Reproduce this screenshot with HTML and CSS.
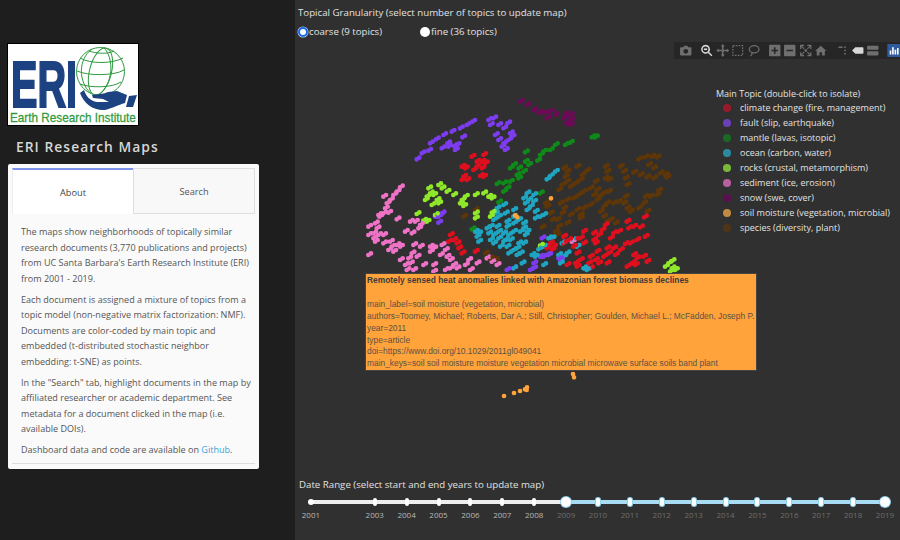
FILE: index.html
```html
<!DOCTYPE html>
<html lang="en">
<head>
<meta charset="utf-8">
<title>ERI Research Maps</title>
<link rel="stylesheet" href="styles.css">
</head>
<body>
<div class="app">
  <aside class="sidebar">
    <svg class="logo" viewBox="0 0 130 81" width="130" height="81" role="img" aria-label="Earth Research Institute logo">
      <rect width="130" height="81" fill="#fff"/>
      <text class="logo-eri" transform="translate(3 63) scale(.61 1)">ERI</text>
      <g fill="none" stroke="#2f9a3f" stroke-width="1">
        <circle cx="92.500" cy="27.500" r="24"/>
        <ellipse cx="92.500" cy="27.500" rx="11" ry="24" transform="rotate(14 92.500 27.500)"/>
        <path d="M96 3.800 C106 14 106 40 90 51.500"/>
        <path d="M84 5 C70 15 70 38 83 49.500"/>
        <path d="M72 14 C82 20 104 20 115 14"/>
        <path d="M69 27 C80 32 106 32 116 26"/>
        <path d="M72 40 C82 44 104 44 113 38"/>
        <path d="M81 7 C90 10 100 10 106 7"/>
      </g>
      <path fill="#1d4282" d="M72 49 L76 46 C78 52 82 57 89 58 L101 58 L95 55 L85 54 L84 51 C90 50 96 50 100 48 L109 47 L119 51 L117 59 C110 61 105 64 97 66 C86 67 76 60 72 49 Z"/>
      <path fill="#1d4282" d="M121 52 L129 51 L125 63 L118 63 Z"/>
      <text class="logo-name" transform="translate(2 78) scale(.87 1)">Earth Research Institute</text>
    </svg>
    <h1 class="app-title">ERI Research Maps</h1>
    <section class="panel">
      <div class="tabs">
        <div class="tab tab-active">About</div>
        <div class="tab">Search</div>
      </div>
      <div class="about">
        <p>The maps show neighborhoods of topically similar research documents (3,770 publications and projects) from UC Santa Barbara's Earth Research Institute (ERI) from 2001 - 2019.</p>
        <p>Each document is assigned a mixture of topics from a topic model (non-negative matrix factorization: NMF). Documents are color-coded by main topic and embedded (t-distributed stochastic neighbor embedding: t-SNE) as points.</p>
        <p>In the "Search" tab, highlight documents in the map by affiliated researcher or academic department. See metadata for a document clicked in the map (i.e. available DOIs).</p>
        <p>Dashboard data and code are available on <a href="#github">Github</a>.</p>
      </div>
    </section>
  </aside>

  <main class="main">
    <div class="control-label">Topical Granularity (select number of topics to update map)</div>
    <div class="radios">
      <label class="radio"><input type="radio" name="gran" checked>coarse (9 topics)</label>
      <label class="radio"><input type="radio" name="gran">fine (36 topics)</label>
    </div>

    <div class="plot">
      <svg class="scatter" viewBox="-165 -183 1815 1314" aria-hidden="true">
        <g id="cloud">
        <path class="pts" stroke="#ee72c6" d="M150 262h.1M140 275h.1M130 285h.1M100 290h.1M120 300h.1M110 310h.1M105 325h.1M100 340h.1M85 345h.1M115 338h.1M88 350h.1M140 358h.1M75 370h.1M80 385h.1M55 380h.1M55 405h.1M70 400h.1M85 405h.1M70 415h.1M100 405h.1M75 425h.1M100 430h.1M120 425h.1M125 440h.1M140 435h.1M150 440h.1M115 450h.1M130 455h.1M55 465h.1M180 365h.1M195 365h.1M210 375h.1M205 385h.1M165 395h.1M185 400h.1M190 435h.1M210 440h.1M240 440h.1M250 445h.1M275 435h.1M240 455h.1M185 460h.1M175 475h.1M150 480h.1M165 495h.1M180 490h.1M200 470h.1M285 450h.1M290 470h.1M270 465h.1M220 495h.1M250 495h.1M250 515h.1M300 480h.1M310 495h.1M320 505h.1M345 495h.1M380 490h.1M355 480h.1M190 510h.1M170 510h.1M300 505h.1M285 510h.1M410 475h.1M425 485h.1M440 495h.1M360 510h.1M665 425h.1"/>
        <path class="pts" stroke="#7d3cf0" d="M200 178h.1M215 160h.1M235 152h.1M240 130h.1M258 118h.1M280 105h.1M305 95h.1M330 85h.1M350 75h.1M367 65h.1M275 145h.1M292 130h.1M295 140h.1M312 138h.1M315 150h.1M320 135h.1M337 112h.1M415 60h.1M420 75h.1M430 55h.1M445 75h.1M460 85h.1M472 70h.1M435 105h.1M445 120h.1M460 130h.1M465 150h.1M480 100h.1M485 110h.1M475 120h.1M455 140h.1M265 350h.1M275 340h.1M255 350h.1M270 345h.1M265 368h.1M575 415h.1M590 465h.1M580 470h.1M570 470h.1M595 465h.1M550 490h.1M540 510h.1M550 505h.1M625 475h.1M630 480h.1M470 510h.1M490 505h.1"/>
        <path class="pts" stroke="#6d0a58" stroke-width="9" d="M510 5h.1M530 15h.1M550 30h.1M565 38h.1M580 40h.1M590 55h.1M600 35h.1M615 45h.1M645 42h.1M660 45h.1M642 55h.1M662 60h.1M648 70h.1M660 75h.1"/>
        <path class="pts" stroke="#0f8a1a" d="M725 112h.1M735 112h.1M660 128h.1M645 135h.1M615 135h.1M600 150h.1M580 155h.1M570 165h.1M562 182h.1M525 157h.1M525 185h.1M535 195h.1M490 195h.1M480 205h.1M505 205h.1M520 215h.1M500 225h.1M505 235h.1M480 245h.1M460 250h.1M440 252h.1M470 265h.1M460 275h.1M445 307h.1M365 388h.1M570 280h.1"/>
        <path class="pts" stroke="#5e3608" d="M865 178h.1M885 172h.1M905 170h.1M920 172h.1M895 195h.1M910 205h.1M850 218h.1M870 225h.1M890 232h.1M910 235h.1M930 220h.1M945 225h.1M950 232h.1M885 290h.1M900 290h.1M920 285h.1M925 272h.1M880 310h.1M865 325h.1M890 335h.1M640 205h.1M650 215h.1M645 230h.1M650 245h.1M635 255h.1M625 270h.1M680 200h.1M710 212h.1M695 225h.1M690 240h.1M675 250h.1M660 260h.1M765 200h.1M770 215h.1M765 235h.1M775 240h.1M810 200h.1M820 215h.1M825 235h.1M830 255h.1M735 245h.1M740 270h.1M720 265h.1M700 275h.1M685 285h.1M670 295h.1M650 300h.1M630 310h.1M640 325h.1M635 340h.1M620 360h.1M605 360h.1M625 380h.1M615 395h.1M575 382h.1M590 320h.1M585 310h.1M600 340h.1M660 345h.1M680 330h.1M700 325h.1M720 315h.1M690 345h.1M690 355h.1M760 280h.1M745 290h.1M730 285h.1M775 275h.1M740 300h.1M770 310h.1M760 320h.1M750 335h.1M760 350h.1M770 365h.1M790 310h.1M805 305h.1M825 290h.1M820 310h.1M830 325h.1M840 335h.1M650 370h.1M795 370h.1M780 360h.1M620 405h.1M405 460h.1M420 475h.1M435 480h.1M375 330h.1M340 350h.1"/>
        <path class="pts" stroke="#1ea5c2" d="M530 280h.1M520 295h.1M535 300h.1M550 285h.1M550 305h.1M525 310h.1M540 320h.1M530 330h.1M555 335h.1M555 355h.1M580 345h.1M570 350h.1M460 315h.1M440 325h.1M435 340h.1M445 350h.1M430 360h.1M465 340h.1M490 330h.1M490 350h.1M470 365h.1M505 360h.1M470 380h.1M440 380h.1M410 385h.1M420 380h.1M445 395h.1M460 400h.1M475 405h.1M490 395h.1M520 370h.1M520 385h.1M510 395h.1M530 395h.1M525 405h.1M375 395h.1M385 400h.1M380 410h.1M385 425h.1M420 420h.1M430 430h.1M465 420h.1M480 420h.1M450 440h.1M470 440h.1M490 450h.1M505 430h.1M520 430h.1M500 445h.1M510 460h.1M475 460h.1M500 465h.1M515 490h.1M590 238h.1M600 228h.1M615 215h.1M545 465h.1M555 470h.1M565 448h.1M650 460h.1M625 465h.1M630 490h.1M580 495h.1M640 470h.1M605 415h.1M595 415h.1M580 440h.1M635 430h.1M670 420h.1M680 440h.1M490 505h.1M700 505h.1M710 510h.1M460 425h.1M445 415h.1M430 405h.1M415 400h.1M490 370h.1"/>
        <path class="pts" stroke="#e00f1e" d="M365 170h.1M400 165h.1M380 185h.1M395 185h.1M405 190h.1M380 200h.1M370 210h.1M395 205h.1M335 200h.1M345 205h.1M340 230h.1M335 240h.1M350 240h.1M390 228h.1M400 230h.1M300 405h.1M310 420h.1M295 425h.1M320 430h.1M325 445h.1M335 460h.1M375 455h.1M882 352h.1M830 365h.1M850 380h.1M870 382h.1M835 385h.1M765 375h.1M755 390h.1M745 405h.1M700 395h.1M730 400h.1M730 420h.1M735 430h.1M790 400h.1M780 415h.1M805 395h.1M885 410h.1M860 420h.1M840 430h.1M825 432h.1M640 410h.1M655 420h.1M690 415h.1M700 430h.1M675 420h.1M600 430h.1M590 445h.1M610 440h.1M605 450h.1M770 445h.1M790 445h.1M810 450h.1M775 460h.1M795 465h.1M740 455h.1M720 470h.1M680 460h.1M675 490h.1M690 480h.1M715 490h.1M735 480h.1M760 470h.1M745 490h.1M850 465h.1M880 470h.1M890 485h.1M845 490h.1M855 495h.1M830 500h.1M770 490h.1M650 495h.1M860 475h.1M640 430h.1M670 440h.1M720 505h.1M680 500h.1"/>
        <path class="pts" stroke="#8fe82a" d="M265 255h.1M275 265h.1M290 275h.1M310 285h.1M235 265h.1M240 280h.1M230 290h.1M250 285h.1M260 300h.1M245 315h.1M265 310h.1M225 300h.1M345 290h.1M335 300h.1M330 310h.1M340 318h.1M375 285h.1M400 280h.1M415 290h.1M425 295h.1M200 342h.1M220 362h.1M230 365h.1M255 345h.1M375 340h.1M375 355h.1M420 350h.1M425 338h.1M570 437h.1M965 483h.1M955 490h.1M945 500h.1M965 505h.1M975 510h.1M960 515h.1"/>
        </g>
        <use href="#cloud" transform="translate(8 -5)"/>
        <path class="pts" stroke="#ffa33a" d="M495 346h.1M502 352h.1M603 295h.1M669 822h.1M672 832h.1M462 888h.1M492 879h.1M510 873h.1M525 868h.1M531 862h.1M530 870h.1"/>
      </svg>

      <div class="modebar">
        <div class="mb-group">
          <svg class="mb-icon" viewBox="0 0 16 16"><path fill-rule="evenodd" d="M2 4h3l1-2h4l1 2h3a1 1 0 0 1 1 1v8a1 1 0 0 1-1 1H2a1 1 0 0 1-1-1V5a1 1 0 0 1 1-1zM8 6a3 3 0 1 0 0 6 3 3 0 0 0 0-6z"/></svg>
        </div>
        <div class="mb-group">
          <svg class="mb-icon mb-on" viewBox="0 0 16 16"><path fill-rule="evenodd" d="M6.500 1a5.500 5.500 0 0 1 4.400 8.800l4 4-1.300 1.300-4-4A5.500 5.500 0 1 1 6.500 1zM6.500 3a3.500 3.500 0 1 0 0 7 3.500 3.500 0 0 0 0-7z"/><path d="M4.500 5.500h4v2h-4z"/></svg>
          <svg class="mb-icon" viewBox="0 0 16 16"><path d="M8 0l2.500 3H9v4h4V5.500L16 8l-3 2.500V9H9v4h1.500L8 16l-2.500-3H7V9H3v1.500L0 8l3-2.500V7h4V3H5.500z"/></svg>
          <svg class="mb-icon mb-line" viewBox="0 0 16 16"><rect x="2" y="2" width="12" height="12" stroke-dasharray="2 1.500"/></svg>
          <svg class="mb-icon mb-line" viewBox="0 0 16 16"><ellipse cx="8.500" cy="6.500" rx="6" ry="4.500"/><path d="M6 11c0 2-1 3-2 4"/></svg>
        </div>
        <div class="mb-group">
          <svg class="mb-icon" viewBox="0 0 16 16"><path fill-rule="evenodd" d="M2 1h12a1 1 0 0 1 1 1v12a1 1 0 0 1-1 1H2a1 1 0 0 1-1-1V2a1 1 0 0 1 1-1zM7 4v3H4v2h3v3h2V9h3V7H9V4z"/></svg>
          <svg class="mb-icon" viewBox="0 0 16 16"><path fill-rule="evenodd" d="M2 1h12a1 1 0 0 1 1 1v12a1 1 0 0 1-1 1H2a1 1 0 0 1-1-1V2a1 1 0 0 1 1-1zM4 7v2h8V7z"/></svg>
          <svg class="mb-icon" viewBox="0 0 16 16"><path d="M1 1h5v1.500H3.500L6.500 5.500 5.500 6.500 2.500 3.500V6H1zM15 1v5h-1.500V3.500l-3 3-1-1 3-3H10V1zM1 15v-5h1.500v2.500l3-3 1 1-3 3H6V15zM15 15h-5v-1.500h2.500l-3-3 1-1 3 3V10H15z"/><path d="M6.500 6.500h3v3h-3z"/></svg>
          <svg class="mb-icon" viewBox="0 0 16 16"><path d="M8 2l7 6.500h-2V14H9.500v-4h-3v4H3V8.500H1z"/></svg>
        </div>
        <div class="mb-group">
          <svg class="mb-icon" viewBox="0 0 16 16"><path d="M4 3h5v2H4zM11 3h2v2h-2zM11 7h2v2h-2zM11 11h2v2h-2z"/></svg>
          <svg class="mb-icon mb-bright" viewBox="0 0 16 16"><path d="M5 4h9a1 1 0 0 1 1 1v6a1 1 0 0 1-1 1H5L1 8z"/></svg>
          <svg class="mb-icon" viewBox="0 0 16 16"><path d="M2 2h12a1 1 0 0 1 1 1v3a1 1 0 0 1-1 1H2a1 1 0 0 1-1-1V3a1 1 0 0 1 1-1zM2 9h12a1 1 0 0 1 1 1v3a1 1 0 0 1-1 1H2a1 1 0 0 1-1-1v-3a1 1 0 0 1 1-1z"/></svg>
        </div>
        <div class="mb-group">
          <svg class="mb-icon mb-logo" viewBox="0 0 16 16"><rect width="16" height="16" rx="1.500" fill="#2f5a9e"/><path fill="#fff" d="M3 13V8h2v5zM6 13V4h2v9zM9 13V7h2v6zM12 13V5h2v8z"/></svg>
        </div>
      </div>

      <div class="legend">
        <div class="legend-title">Main Topic (double-click to isolate)</div>
        <ul class="legend-list">
          <li><span class="swatch s-climate"></span>climate change (fire, management)</li>
          <li><span class="swatch s-fault"></span>fault (slip, earthquake)</li>
          <li><span class="swatch s-mantle"></span>mantle (lavas, isotopic)</li>
          <li><span class="swatch s-ocean"></span>ocean (carbon, water)</li>
          <li><span class="swatch s-rocks"></span>rocks (crustal, metamorphism)</li>
          <li><span class="swatch s-sediment"></span>sediment (ice, erosion)</li>
          <li><span class="swatch s-snow"></span>snow (swe, cover)</li>
          <li><span class="swatch s-soil"></span>soil moisture (vegetation, microbial)</li>
          <li><span class="swatch s-species"></span>species (diversity, plant)</li>
        </ul>
      </div>

      <div class="tooltip">
        <div class="tip-title">Remotely sensed heat anomalies linked with Amazonian forest biomass declines</div>
        <div class="tip-line">&nbsp;</div>
        <div class="tip-line">main_label=soil moisture (vegetation, microbial)</div>
        <div class="tip-line">authors=Toomey, Michael; Roberts, Dar A.; Still, Christopher; Goulden, Michael L.; McFadden, Joseph P.</div>
        <div class="tip-line">year=2011</div>
        <div class="tip-line">type=article</div>
        <div class="tip-line">doi=https://www.doi.org/10.1029/2011gl049041</div>
        <div class="tip-line">main_keys=soil soil moisture moisture vegetation microbial microwave surface soils band plant</div>
      </div>
    </div>

    <div class="control-label range-label">Date Range (select start and end years to update map)</div>
    <div class="slider">
      <div class="track">
        <div class="track-off"></div>
        <div class="track-on"></div>
      </div>
      <div class="ticks">
        <div class="tick"><span class="dot"></span><span class="year">2001</span></div>
        <div class="tick tick-empty"></div>
        <div class="tick"><span class="dot"></span><span class="year">2003</span></div>
        <div class="tick"><span class="dot"></span><span class="year">2004</span></div>
        <div class="tick"><span class="dot"></span><span class="year">2005</span></div>
        <div class="tick"><span class="dot"></span><span class="year">2006</span></div>
        <div class="tick"><span class="dot"></span><span class="year">2007</span></div>
        <div class="tick"><span class="dot"></span><span class="year">2008</span></div>
        <div class="tick tick-in"><span class="handle"></span><span class="year">2009</span></div>
        <div class="tick tick-in"><span class="dot"></span><span class="year">2010</span></div>
        <div class="tick tick-in"><span class="dot"></span><span class="year">2011</span></div>
        <div class="tick tick-in"><span class="dot"></span><span class="year">2012</span></div>
        <div class="tick tick-in"><span class="dot"></span><span class="year">2013</span></div>
        <div class="tick tick-in"><span class="dot"></span><span class="year">2014</span></div>
        <div class="tick tick-in"><span class="dot"></span><span class="year">2015</span></div>
        <div class="tick tick-in"><span class="dot"></span><span class="year">2016</span></div>
        <div class="tick tick-in"><span class="dot"></span><span class="year">2017</span></div>
        <div class="tick tick-in"><span class="dot"></span><span class="year">2018</span></div>
        <div class="tick tick-in"><span class="handle"></span><span class="year">2019</span></div>
      </div>
    </div>
  </main>
</div>
</body>
</html>
```

FILE: styles.css
```css
* { box-sizing: border-box; }

html, body {
  margin: 0;
  height: 100%;
  overflow: hidden;
}

body {
  font-family: "Open Sans", "Noto Sans", sans-serif;
  background: #303030;
}

.app {
  display: flex;
  width: 900px;
  height: 540px;
}

/* Sidebar */
.sidebar {
  width: 295px;
  flex: none;
  background: #1e1e1e;
  padding: 44px 36px 0 8px;
}

.logo {
  display: block;
  outline: 1px solid #000;
}

.logo-eri {
  font-family: "Liberation Sans", sans-serif;
  font-weight: 700;
  font-size: 65px;
  fill: #1d4282;
  stroke: #1d4282;
  stroke-width: 2.200;
}

.logo-name {
  font-family: "Liberation Sans", sans-serif;
  font-size: 13.500px;
  font-weight: 400;
  fill: #2e9a3c;
  stroke: #2e9a3c;
  stroke-width: .25;
}

.app-title {
  margin: 12px 0 7px 8px;
  font-size: 13.800px;
  line-height: 20px;
  font-weight: 600;
  letter-spacing: 1.05px;
  color: #d6d6d6;
}

.panel {
  width: 251px;
  height: 305px;
  padding: 4px 4px 6px;
  background: #fafafa;
  border-radius: 2px;
  display: flex;
  flex-direction: column;
  color: #555;
}

.tabs {
  display: flex;
  flex: none;
  height: 46px;
  font-size: 9.200px;
}

.tab {
  flex: 1;
  display: flex;
  align-items: center;
  justify-content: center;
  background: #f8f8f8;
  border: 1px solid #dedede;
  color: #555;
}

.tab-active {
  background: #fff;
  border-width: 2px 0 0;
  border-top-color: #7b93e8;
  border-left: 1px solid #eee;
  color: #444;
}

.about {
  flex: 1;
  padding: 10px 2px 0 9px;
  font-size: 9.050px;
  line-height: 15.500px;
  border-bottom: 1px solid #dedede;
}

.about p {
  margin: 0 0 5.500px;
}

.about a {
  color: #3aa3dc;
  text-decoration: none;
}

/* Main column */
.main {
  width: 605px;
  flex: none;
  display: flex;
  flex-direction: column;
  background: #303030;
}

.control-label {
  margin: 6px 0 0 3px;
  font-size: 9.700px;
  line-height: 14px;
  color: #e2e2e2;
}

.radios {
  display: flex;
  margin: 5px 0 0 3px;
  height: 14px;
}

.radio {
  display: flex;
  align-items: center;
  width: 122px;
  font-size: 9.700px;
  line-height: 14px;
  color: #e2e2e2;
}

.radio input {
  appearance: none;
  width: 10px;
  height: 10px;
  margin: 0 1px 0 0;
  border-radius: 50%;
  background: #fff;
  flex: none;
}

.radio input:checked {
  border: 2.500px solid #1668e3;
  box-shadow: 0 0 0 .5px #cfe0ff;
}

/* Plot */
.plot {
  position: relative;
  flex: 1;
  min-height: 0;
}

.scatter {
  display: block;
  width: 100%;
  height: 100%;
}

.pts {
  fill: none;
  stroke-width: 14;
  stroke-linecap: round;
}

.modebar {
  position: absolute;
  top: 3px;
  right: 0;
  width: 226px;
  height: 17px;
  padding-left: 4px;
  display: flex;
  gap: 5.500px;
  background: #262626;
}

.mb-group {
  display: flex;
  align-items: center;
}

.mb-icon {
  width: 15.500px;
  height: 13px;
  fill: #6f6f6f;
}

.mb-on { fill: #d8d8d8; }
.mb-bright { fill: #d8d8d8; }

.mb-line {
  fill: none;
  stroke: #6f6f6f;
  stroke-width: 1.500;
}

.legend {
  position: absolute;
  left: 421px;
  top: 47px;
  font-size: 9px;
  line-height: 15px;
  color: #e2e2e2;
  white-space: nowrap;
}

.legend-title {
  height: 14px;
}

.legend-list {
  margin: 0;
  padding: 0;
  list-style: none;
}

.legend-list li {
  display: flex;
  align-items: center;
  height: 15px;
}

.swatch {
  width: 8px;
  height: 8px;
  border-radius: 50%;
  margin: 0 9px 0 7px;
  flex: none;
}

.s-climate { background: #991a2a; }
.s-fault { background: #6b40b8; }
.s-mantle { background: #1a6a22; }
.s-ocean { background: #2a8aa0; }
.s-rocks { background: #7ab83a; }
.s-sediment { background: #b860a0; }
.s-snow { background: #5a1050; }
.s-soil { background: #c08a40; }
.s-species { background: #4f3415; }

.tooltip {
  position: absolute;
  left: 70px;
  top: 234px;
  width: 392px;
  height: 98px;
  padding: 1px 1px 0;
  background: #ffa33a;
  border: 1px solid #444;
  font-family: "Liberation Sans", Arial, sans-serif;
  font-size: 8.400px;
  line-height: 11.900px;
  color: #5c5145;
  white-space: nowrap;
}

.tip-title {
  font-weight: 700;
  color: #3c3c3c;
}

/* Range slider */
.range-label {
  margin: 1px 0 0 4px;
}

.slider {
  position: relative;
  height: 48px;
}

.track {
  position: absolute;
  left: 16px;
  top: 8px;
  display: flex;
  width: 574px;
  height: 4px;
}

.track-off {
  width: 255px;
  background: #eee;
}

.track-on {
  flex: 1;
  background: #a8dcf5;
}

.ticks {
  position: relative;
  display: grid;
  grid-template-columns: repeat(19, 31.900px);
  width: 606px;
}

.tick {
  display: flex;
  flex-direction: column;
  align-items: center;
}

.dot {
  width: 4px;
  height: 8px;
  margin: 6px 0 3px;
  border-radius: 2px;
  background: #fff;
}

.tick:first-child .dot {
  width: 6px;
  height: 6px;
  margin: 7px 0 4px;
  border-radius: 50%;
}

.tick-in .dot {
  box-shadow: 0 0 0 1px #8fd0f0;
}

.handle {
  width: 10px;
  height: 10px;
  margin: 5px 0 2px;
  border-radius: 50%;
  background: #fff;
  box-shadow: 0 0 0 1px #8fd0f0;
}

.year {
  font-size: 8px;
  line-height: 12px;
  color: #b8b8b8;
}

.tick-in .year {
  color: #6e6e6e;
}
```
